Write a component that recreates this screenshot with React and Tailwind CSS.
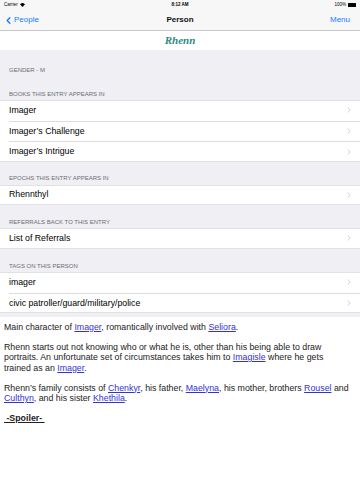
import { ChevronLeft } from 'lucide-react'

const font = { fontFamily: '"Liberation Sans", Arial, sans-serif' }

const Chevron = () => (
  <svg width="4" height="6" viewBox="0 0 4 6" className="shrink-0">
    <path d="M0.6 0.5 L3.2 3 L0.6 5.5" fill="none" stroke="#c7c7cc" strokeWidth="0.8" />
  </svg>
)

const Header = ({ children, h = 'h-[23px]' }) => (
  <div className={`${h} flex items-end pb-[3.5px] pl-[9px] text-[6px] leading-[6px] text-[#6d6d72]`}>
    {children}
  </div>
)

const Rows = ({ items }) => (
  <div className="bg-white shadow-[inset_0_1px_0_#e2e2e6,inset_0_-1px_0_#e2e2e6]">
    {items.map((item, i) => (
      <div key={item} className="h-[20.5px] flex pl-[9px]">
        <div
          className={`flex-1 flex items-center justify-between pr-[9px] text-[8.75px] text-black ${
            i > 0 ? 'border-t border-[#dcdce0]' : ''
          }`}
        >
          <span>{item}</span>
          <Chevron />
        </div>
      </div>
    ))}
  </div>
)

const A = ({ children }) => <a className="text-[#3232d6] underline">{children}</a>

export default function App() {
  return (
    <div className="w-[360px] h-[480px] bg-white overflow-hidden" style={font}>
      {/* status bar */}
      <div className="h-[10px] bg-[#f7f7f7] flex items-center justify-between px-[4px] text-[4.5px] text-black relative">
        <div className="flex items-center gap-[2px]">
          <span>Carrier</span>
          <svg width="5" height="4" viewBox="0 0 10 8">
            <path d="M5 8 L0 2.5 A7 7 0 0 1 10 2.5 Z" fill="#000" />
          </svg>
        </div>
        <span className="absolute left-1/2 -translate-x-1/2 font-bold">8:12 AM</span>
        <div className="flex items-center gap-[2px]">
          <span>100%</span>
          <div className="w-[8px] h-[3.5px] bg-black rounded-[0.5px]"></div>
        </div>
      </div>

      {/* nav bar */}
      <div className="h-[21px] bg-[#f7f7f7] border-b border-[#c8c7cc] flex items-center justify-between relative text-[8px]">
        <div className="flex items-center text-[#157efb] pl-[3px]">
          <ChevronLeft className="w-[11px] h-[11px]" strokeWidth={3} />
          <span>People</span>
        </div>
        <span className="absolute left-1/2 -translate-x-1/2 font-bold text-[#111]">Person</span>
        <span className="text-[#157efb] pr-[10px]">Menu</span>
      </div>

      {/* title */}
      <div className="h-[19px] flex items-center justify-center">
        <span
          className="text-[11px] font-bold italic text-[#2c8a82]"
          style={{ fontFamily: '"Liberation Serif", "Times New Roman", serif' }}
        >
          Rhenn
        </span>
      </div>

      <div className="bg-[#efeff4]">
        <Header h="h-[26.5px]">GENDER - M</Header>
        <Header h="h-[23.5px]">BOOKS THIS ENTRY APPEARS IN</Header>
        <Rows items={["Imager", "Imager’s Challenge", "Imager’s Intrigue"]} />
        <Header>EPOCHS THIS ENTRY APPEARS IN</Header>
        <Rows items={["Rhennthyl"]} />
        <Header>REFERRALS BACK TO THIS ENTRY</Header>
        <Rows items={["List of Referrals"]} />
        <Header h="h-[23.5px]">TAGS ON THIS PERSON</Header>
        <Rows items={["imager", "civic patroller/guard/military/police"]} />
        <div className="h-[4px]"></div>
      </div>

      {/* description */}
      <div className="px-[4px] pt-[4.5px] text-[8.8px] leading-[10.5px] text-[#222] flex flex-col gap-[9.5px]">
        <p>
          Main character of <A>Imager</A>, romantically involved with <A>Seliora</A>.
        </p>
        <p>
          Rhenn starts out not knowing who or what he is, other than his being able to draw portraits. An
          unfortunate set of circumstances takes him to <A>Imagisle</A> where he gets
          <br />
          trained as an <A>Imager</A>.
        </p>
        <p>
          Rhenn’s family consists of <A>Chenkyr</A>, his father, <A>Maelyna</A>, his mother, brothers{' '}
          <A>Rousel</A> and <A>Culthyn</A>, and his sister <A>Khethila</A>.
        </p>
        <p className="font-bold underline">&nbsp;-Spoiler-&nbsp;</p>
      </div>
    </div>
  )
}
